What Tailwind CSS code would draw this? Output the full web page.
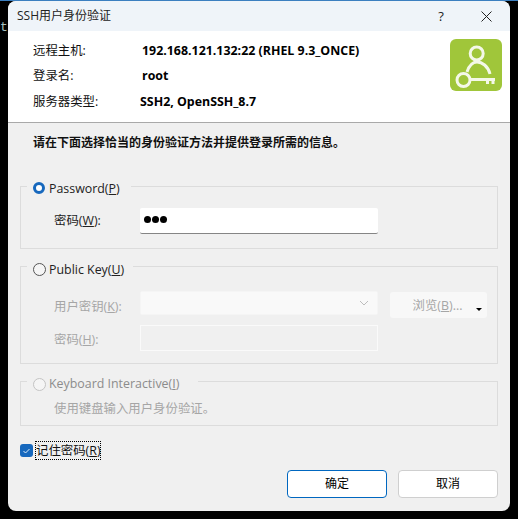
<!DOCTYPE html>
<html lang="zh-CN">
<head>
  <meta charset="UTF-8" />
  <title>SSH用户身份验证</title>
  <script src="https://cdn.jsdelivr.net/npm/@tailwindcss/browser@4"></script>
</head>
<body class="bg-black w-[518px] h-[519px] overflow-hidden relative text-[12.4px] leading-[18px] text-[#111] font-['Open_Sans','Noto_Sans_CJK_SC',sans-serif]">
  <!-- terminal behind the dialog -->
  <div class="absolute left-0 top-0 w-full h-px bg-[#3b7fc0]"></div>
  <div class="absolute left-0 top-[19px] text-[13px] text-[#a8c0c0] font-['Liberation_Mono',monospace]">t</div>

  <div class="absolute left-[8px] top-[1px] w-[502px] h-[510px] rounded-[8px] overflow-hidden bg-[#f0f0f0] flex flex-col">
    <!-- title bar -->
    <div class="h-[30px] shrink-0 bg-[#eff4f9] flex items-center pl-[9px]">
      <span class="text-[12px] text-[#222]">SSH用户身份验证</span>
      <span class="ml-auto text-[13px] text-[#222] w-[20px] text-center">?</span>
      <svg class="ml-[30px] mr-[18px]" width="11" height="11" viewBox="0 0 11 11" fill="none" stroke="#222" stroke-width="1"><path d="M.5.5l10 10M10.5.5l-10 10"/></svg>
    </div>

    <!-- host info -->
    <div class="h-[92px] shrink-0 bg-white border-b border-[#a9a9a9] flex pl-[25px] pr-[8px]">
      <div class="pt-[7px] grid grid-cols-[109px_auto] auto-rows-[25.5px] items-center self-start">
        <span>远程主机:</span><b class="font-bold text-[12.4px] text-black">192.168.121.132:22 (RHEL 9.3_ONCE)</b>
        <span>登录名:</span><b class="font-bold text-[12.4px] text-black">root</b>
        <span>服务器类型:</span><b class="font-bold text-[12.4px] text-black -ml-[2px]">SSH2, OpenSSH_8.7</b>
      </div>
      <div class="ml-auto mt-[8px] w-[52px] h-[52px] rounded-[6px] bg-[#a0c63a]">
        <svg width="52" height="52" viewBox="0 0 52 52" fill="none" stroke="#f4f8e8" stroke-width="3">
          <circle cx="26.700" cy="14.500" r="6.500"/>
          <path d="M17 33c2-6 5-10 10-10s11 4 13 12"/>
          <circle cx="13.500" cy="41" r="6.500"/>
          <path d="M20 40.500H45M37.500 40.500v4.500M43 40.500v4.500"/>
        </svg>
      </div>
    </div>

    <!-- body -->
    <div class="flex-1 px-[12px] pt-[11px]">
      <p class="pl-[13px] font-bold text-[12px] text-[#111] h-[18px] leading-[18px]">请在下面选择恰当的身份验证方法并提供登录所需的信息。</p>

      <!-- password -->
      <fieldset class="mt-[26px] h-[71px] border border-[#dcdcdc]">
        <legend class="ml-[6px] w-[104px] pl-[6px] h-[16px] flex items-center gap-[4px] text-[#222]">
          <span class="relative top-[2px] w-[12px] h-[12px] rounded-full border-[3.5px] border-[#1768bd] bg-white"></span>
          <span class="relative top-[3px]">Password(<u>P</u>)</span>
        </legend>
        <div class="flex items-center mt-[14px] pl-[33px]">
          <span class="w-[86px] text-[#222]">密码(<u>W</u>):</span>
          <div class="w-[238px] h-[26px] bg-white border-b border-[#858585] rounded-[2px] pl-[4px] pb-[3px] flex items-center gap-[1px]">
            <i class="w-[7px] h-[7px] rounded-full bg-black"></i><i class="w-[7px] h-[7px] rounded-full bg-black"></i><i class="w-[7px] h-[7px] rounded-full bg-black"></i>
          </div>
        </div>
      </fieldset>

      <!-- public key -->
      <fieldset class="mt-[9px] h-[106px] border border-[#dcdcdc] text-[#a6a6a6]">
        <legend class="ml-[6px] w-[106px] pl-[6px] h-[16px] flex items-center gap-[4px] text-[#222]">
          <span class="relative top-[3px] w-[13px] h-[13px] rounded-full border border-[#555] bg-[#f5f5f5]"></span>
          <span class="relative top-[4px] -ml-[1px]">Public Key(<u>U</u>)</span>
        </legend>
        <div class="flex items-start mt-[17px] pl-[33px]">
          <span class="w-[86px] pt-[7px]">用户密钥(<u>K</u>):</span>
          <div class="w-[238px] h-[24px] bg-[#f9f9f9] border border-[#f5f5f5] rounded-[2px] flex items-center justify-end pr-[8px]">
            <svg width="10" height="6" viewBox="0 0 10 6" fill="none" stroke="#bdbdbd"><path d="M1 1l4 4 4-4"/></svg>
          </div>
          <div class="ml-[12px] mt-[1px] w-[97px] h-[26px] bg-[#f8f8f8] rounded-[3px] relative flex items-center justify-center pr-[2px] pt-[1px]">
            浏览(<u>B</u>)...
            <span class="absolute right-[5px] top-[16px] border-x-[3px] border-t-[3px] border-x-transparent border-t-black"></span>
          </div>
        </div>
        <div class="flex items-center mt-[7px] pl-[33px]">
          <span class="w-[86px] pt-[4px]">密码(<u>H</u>):</span>
          <div class="w-[238px] h-[26px] border border-[#fafafa]"></div>
        </div>
      </fieldset>

      <!-- keyboard interactive -->
      <fieldset class="mt-[9px] h-[53px] border border-[#dcdcdc] text-[#a6a6a6]">
        <legend class="ml-[6px] w-[171px] pl-[6px] h-[16px] flex items-center gap-[4px]">
          <span class="relative top-[3px] w-[13px] h-[13px] rounded-full border border-[#c4c4c4] bg-[#f5f5f5]"></span>
          <span class="relative top-[3px] -ml-[1px] text-[#8c8c8c]">Keyboard Interactive(<u>I</u>)</span>
        </legend>
        <p class="mt-[11px] pl-[33px]">使用键盘输入用户身份验证。</p>
      </fieldset>

      <!-- remember password -->
      <div class="mt-[15px] flex items-center h-[19px]">
        <span class="w-[13px] h-[13px] rounded-[3px] bg-[#1768bd] flex items-center justify-center">
          <svg width="7" height="6" viewBox="0 0 7 6" fill="none" stroke="#dcebf8"><path d="M.5 3l2 2 4-4"/></svg>
        </span>
        <span class="ml-[2px] w-[66px] h-[19px] border border-dotted border-black text-center leading-[17px] whitespace-nowrap">记住密码(<u>R</u>)</span>
      </div>

      <!-- buttons -->
      <div class="mt-[10px] flex justify-end gap-[11px]">
        <button class="w-[100px] h-[28px] bg-white border border-[#0067c0] rounded-[4px] text-[12px] text-black">确定</button>
        <button class="w-[100px] h-[28px] bg-white border border-[#cfcfcf] rounded-[4px] text-[12px] text-black">取消</button>
      </div>
    </div>
  </div>
</body>
</html>
